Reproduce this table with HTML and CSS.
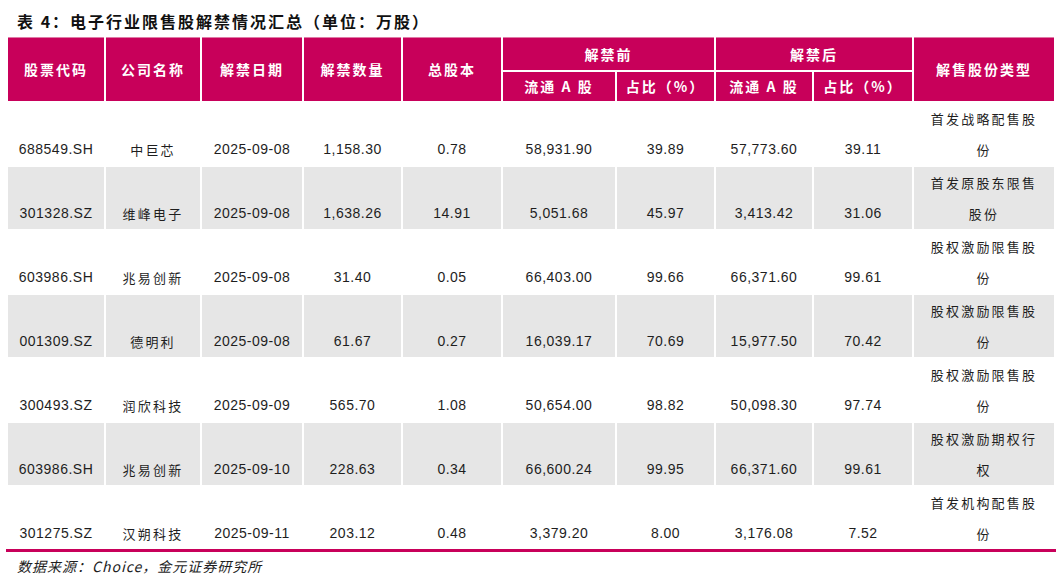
FILE: index.html
```html
<!DOCTYPE html>
<html lang="zh-CN">
<head>
<meta charset="utf-8">
<title>电子行业限售股解禁情况汇总</title>
<link rel="stylesheet" href="styles.css">
</head>
<body>
<div class="page">
  <h1 class="title">表 4：电子行业限售股解禁情况汇总（单位：万股）</h1>
  <table class="grid">
    <colgroup>
      <col class="c1"><col class="c2"><col class="c3"><col class="c4"><col class="c5">
      <col class="c6"><col class="c7"><col class="c8"><col class="c9"><col class="c10">
    </colgroup>
    <thead>
      <tr class="h1">
        <th rowspan="2">股票代码</th>
        <th rowspan="2">公司名称</th>
        <th rowspan="2">解禁日期</th>
        <th rowspan="2">解禁数量</th>
        <th rowspan="2">总股本</th>
        <th colspan="2">解禁前</th>
        <th colspan="2">解禁后</th>
        <th rowspan="2">解售股份类型</th>
      </tr>
      <tr class="h2">
        <th>流通 A 股</th>
        <th>占比（%）</th>
        <th>流通 A 股</th>
        <th>占比（%）</th>
      </tr>
    </thead>
    <tbody>
      <tr>
        <td>688549.SH</td><td class="cn">中巨芯</td><td>2025-09-08</td><td>1,158.30</td><td>0.78</td>
        <td>58,931.90</td><td>39.89</td><td>57,773.60</td><td>39.11</td><td class="cn">首发战略配售股<br>份</td>
      </tr>
      <tr class="alt">
        <td>301328.SZ</td><td class="cn">维峰电子</td><td>2025-09-08</td><td>1,638.26</td><td>14.91</td>
        <td>5,051.68</td><td>45.97</td><td>3,413.42</td><td>31.06</td><td class="cn">首发原股东限售<br>股份</td>
      </tr>
      <tr>
        <td>603986.SH</td><td class="cn">兆易创新</td><td>2025-09-08</td><td>31.40</td><td>0.05</td>
        <td>66,403.00</td><td>99.66</td><td>66,371.60</td><td>99.61</td><td class="cn">股权激励限售股<br>份</td>
      </tr>
      <tr class="alt">
        <td>001309.SZ</td><td class="cn">德明利</td><td>2025-09-08</td><td>61.67</td><td>0.27</td>
        <td>16,039.17</td><td>70.69</td><td>15,977.50</td><td>70.42</td><td class="cn">股权激励限售股<br>份</td>
      </tr>
      <tr>
        <td>300493.SZ</td><td class="cn">润欣科技</td><td>2025-09-09</td><td>565.70</td><td>1.08</td>
        <td>50,654.00</td><td>98.82</td><td>50,098.30</td><td>97.74</td><td class="cn">股权激励限售股<br>份</td>
      </tr>
      <tr class="alt">
        <td>603986.SH</td><td class="cn">兆易创新</td><td>2025-09-10</td><td>228.63</td><td>0.34</td>
        <td>66,600.24</td><td>99.95</td><td>66,371.60</td><td>99.61</td><td class="cn">股权激励期权行<br>权</td>
      </tr>
      <tr class="last">
        <td>301275.SZ</td><td class="cn">汉朔科技</td><td>2025-09-11</td><td>203.12</td><td>0.48</td>
        <td>3,379.20</td><td>8.00</td><td>3,176.08</td><td>7.52</td><td class="cn">首发机构配售股<br>份</td>
      </tr>
    </tbody>
  </table>
  <p class="source">数据来源：Choice，金元证券研究所</p>
</div>
</body>
</html>
```

FILE: styles.css
```css
html, body {
  margin: 0;
  padding: 0;
  background: #ffffff;
}

.page {
  font-family: "Liberation Sans", "Noto Sans CJK SC", sans-serif;
  color: #1e1e1e;
}

.title {
  margin: 0;
  padding: 9px 0 0 17px;
  height: 24px;
  line-height: 24px;
  font-family: "Noto Sans CJK SC", sans-serif;
  font-size: 16px;
  font-weight: 700;
  letter-spacing: 2px;
  color: #111;
}

.grid {
  margin: 4px 0 0 6px;
  width: 1048px;
  table-layout: fixed;
  border-collapse: collapse;
}

.c1 { width: 98px; }
.c2 { width: 96px; }
.c3 { width: 102px; }
.c4 { width: 99px; }
.c5 { width: 100px; }
.c6 { width: 114px; }
.c7 { width: 99px; }
.c8 { width: 98px; }
.c9 { width: 100px; }
.c10 { width: 142px; }

.grid th {
  background: #c8005a;
  color: #ffffff;
  font-family: "Noto Sans CJK SC", sans-serif;
  font-size: 14px;
  font-weight: 700;
  letter-spacing: 2px;
  text-align: center;
  vertical-align: middle;
  border: 2px solid #ffffff;
  padding: 0;
}

.grid thead tr.h1 th {
  border-top: 1px solid #e07aa6;
}

.h1 { height: 33px; }
.h2 { height: 31px; }

.grid td {
  padding: 0;
  height: 61px;
  line-height: 31px;
  text-align: center;
  vertical-align: bottom;
  font-size: 14px;
  letter-spacing: 0.5px;
  border: 2px solid #ffffff;
  white-space: nowrap;
}

.grid td.cn {
  font-family: "Noto Sans CJK SC", sans-serif;
  font-size: 13px;
  letter-spacing: 2.2px;
}

.grid tr.alt td {
  background: #e6e6e6;
}

.grid tr.last td {
  border-bottom: 3px solid #c8005a;
}

.source {
  margin: 3px 0 0 17px;
  font-family: "Noto Sans CJK SC", sans-serif;
  font-size: 14px;
  font-style: italic;
  letter-spacing: 1px;
  line-height: 22px;
  color: #1e1e1e;
}
```
